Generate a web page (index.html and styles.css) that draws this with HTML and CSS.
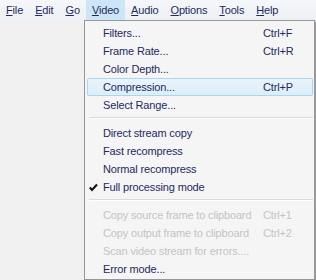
FILE: index.html
```html
<!DOCTYPE html>
<html>
<head>
  <title>VirtualDub</title>
  <link rel="stylesheet" href="styles.css">
</head>
<body>

  <div class="menubar">
    <span class="top-item"><u>F</u>ile</span>
    <span class="top-item"><u>E</u>dit</span>
    <span class="top-item"><u>G</u>o</span>
    <span class="top-item open"><u>V</u>ideo</span>
    <span class="top-item"><u>A</u>udio</span>
    <span class="top-item"><u>O</u>ptions</span>
    <span class="top-item"><u>T</u>ools</span>
    <span class="top-item"><u>H</u>elp</span>
  </div>

  <!-- Video dropdown, drawn over the window -->
  <div class="dropdown">
    <div class="item"><span class="label">Filters...</span><span class="key">Ctrl+F</span></div>
    <div class="item"><span class="label">Frame Rate...</span><span class="key">Ctrl+R</span></div>
    <div class="item"><span class="label">Color Depth...</span></div>
    <div class="item hot"><span class="label">Compression...</span><span class="key">Ctrl+P</span></div>
    <div class="item"><span class="label">Select Range...</span></div>

    <div class="sep"></div>

    <div class="item"><span class="label">Direct stream copy</span></div>
    <div class="item"><span class="label">Fast recompress</span></div>
    <div class="item"><span class="label">Normal recompress</span></div>
    <div class="item">
      <svg class="check" width="9" height="9" viewBox="0 0 9 9">
        <path d="M0.8 4.5 L3 7 L8 1.5" fill="none" stroke="#111" stroke-width="2"/>
      </svg>
      <span class="label">Full processing mode</span>
    </div>

    <div class="sep"></div>

    <div class="item disabled"><span class="label">Copy source frame to clipboard</span><span class="key">Ctrl+1</span></div>
    <div class="item disabled"><span class="label">Copy output frame to clipboard</span><span class="key">Ctrl+2</span></div>
    <div class="item disabled"><span class="label">Scan video stream for errors....</span></div>
    <div class="item"><span class="label">Error mode...</span></div>
  </div>

</body>
</html>
```

FILE: styles.css
```css
body {
  margin: 0;
  background: #f0f0f0;
  font-family: "Liberation Sans", Arial, sans-serif;
  font-size: 11px;
  letter-spacing: -0.15px;
  color: #1e2a62;
}

.menubar {
  display: flex;
  height: 20px;
  background: linear-gradient(#f5f7fa, #edf0f4);
}

.top-item {
  padding: 0 6px;
  line-height: 20px;
  white-space: nowrap;
}

.top-item.open {
  background: #cde6f7;
}

.dropdown {
  position: absolute;
  left: 84px;
  top: 20px;
  width: 226px;
  padding: 3px 1px 1px 2px;
  background: #f5f5f5;
  border: 1px solid #979797;
  box-shadow: 2px 2px 1px rgba(0, 0, 0, 0.35);
}

.item {
  position: relative;
  display: flex;
  height: 18px;
  line-height: 18px;
  padding-left: 16px;
  white-space: nowrap;
}

.label {
  flex: 1;
}

.key {
  width: 50px;
}

.item.hot {
  background: linear-gradient(#eaf4fc, #dcedf9);
  box-shadow: inset 0 0 0 1px #a8d8f0;
  border-radius: 2px;
}

.item.disabled {
  color: #c4c4c4;
}

.check {
  position: absolute;
  left: 2px;
  top: 5px;
}

.sep {
  height: 1px;
  margin: 3px 0 5px 2px;
  border-top: 1px solid #dadada;
  background: #ffffff;
}
```
